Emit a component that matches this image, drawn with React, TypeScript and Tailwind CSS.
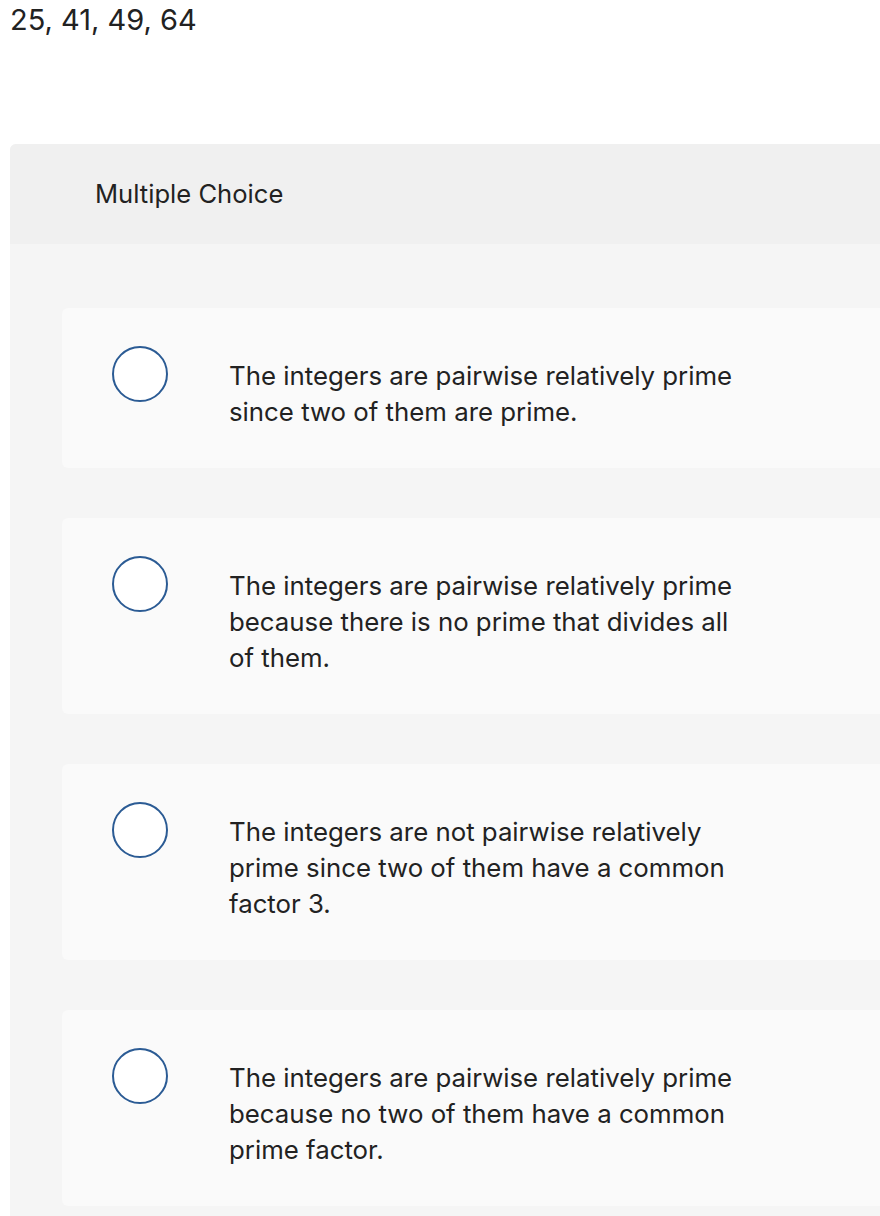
const options = [
  "The integers are pairwise relatively prime since two of them are prime.",
  "The integers are pairwise relatively prime because there is no prime that divides all of them.",
  "The integers are not pairwise relatively prime since two of them have a common factor 3.",
  "The integers are pairwise relatively prime because no two of them have a common prime factor.",
];

export default function App() {
  return (
    <div className="min-h-[1216px] bg-white font-['Inter',sans-serif] text-[#222]">
      <div className="px-[10px] pt-[1px] text-[29px] leading-[38px]">25, 41, 49, 64</div>

      <div className="ml-[10px] mt-[105px] min-h-[1072px] w-[900px] overflow-hidden rounded-tl-[6px] bg-[#f5f5f5]">
        <div className="flex h-[100px] items-center bg-[#f0f0f0] pl-[85px] text-[25.6px]">
          Multiple Choice
        </div>

        <div className="flex flex-col gap-[50px] pb-[11px] pl-[52px] pt-[64px]">
          {options.map((t) => (
            <label
              key={t}
              className="flex items-start rounded-[6px] bg-[#fafafa] pb-[38px] pl-[50px] pt-[38px]"
            >
              <span className="h-[56px] w-[56px] shrink-0 rounded-full border-2 border-[#2b5b94] bg-white" />
              <span className="ml-[61px] mt-[12px] w-[518px] text-[25.8px] leading-[36px]">{t}</span>
            </label>
          ))}
        </div>
      </div>
    </div>
  );
}
